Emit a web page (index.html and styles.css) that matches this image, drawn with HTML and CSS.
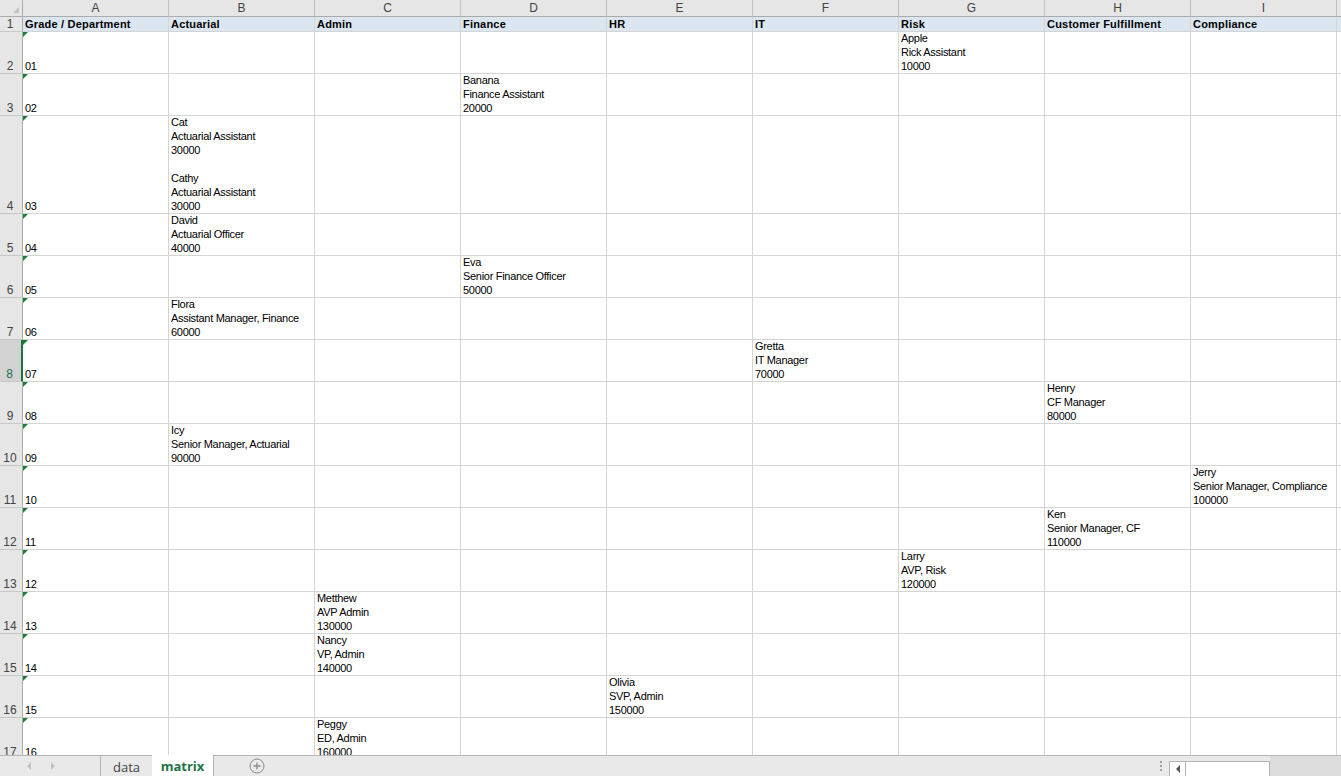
FILE: index.html
```html
<!DOCTYPE html>
<html>
<head>
<meta charset="utf-8">
<link rel="stylesheet" href="styles.css">
</head>
<body>
<div class="app">
  <div class="sheet">
    <div class="grid">
      <!-- column headers -->
      <div class="corner"></div>
      <div class="ch">A</div><div class="ch">B</div><div class="ch">C</div><div class="ch">D</div><div class="ch">E</div><div class="ch">F</div><div class="ch">G</div><div class="ch">H</div><div class="ch">I</div><div class="ch last"></div>
      <!-- row 1 -->
      <div class="rh r1">1</div>
      <div class="c h">Grade / Department</div><div class="c h">Actuarial</div><div class="c h">Admin</div><div class="c h">Finance</div><div class="c h">HR</div><div class="c h">IT</div><div class="c h">Risk</div><div class="c h">Customer Fulfillment</div><div class="c h">Compliance</div><div class="c h j"></div>
      <!-- row 2 -->
      <div class="rh">2</div>
      <div class="c a">01</div><div class="c"></div><div class="c"></div><div class="c"></div><div class="c"></div><div class="c"></div>
      <div class="c"><span>Apple<br>Rick Assistant<br>10000</span></div>
      <div class="c"></div><div class="c"></div><div class="c j"></div>
      <!-- row 3 -->
      <div class="rh">3</div>
      <div class="c a">02</div><div class="c"></div><div class="c"></div>
      <div class="c"><span>Banana<br>Finance Assistant<br>20000</span></div>
      <div class="c"></div><div class="c"></div><div class="c"></div><div class="c"></div><div class="c"></div><div class="c j"></div>
      <!-- row 4 -->
      <div class="rh">4</div>
      <div class="c a">03</div>
      <div class="c"><span>Cat<br>Actuarial Assistant<br>30000<br><br>Cathy<br>Actuarial Assistant<br>30000</span></div>
      <div class="c"></div><div class="c"></div><div class="c"></div><div class="c"></div><div class="c"></div><div class="c"></div><div class="c"></div><div class="c j"></div>
      <!-- row 5 -->
      <div class="rh">5</div>
      <div class="c a">04</div>
      <div class="c"><span>David<br>Actuarial Officer<br>40000</span></div>
      <div class="c"></div><div class="c"></div><div class="c"></div><div class="c"></div><div class="c"></div><div class="c"></div><div class="c"></div><div class="c j"></div>
      <!-- row 6 -->
      <div class="rh">6</div>
      <div class="c a">05</div><div class="c"></div><div class="c"></div>
      <div class="c"><span>Eva<br>Senior Finance Officer<br>50000</span></div>
      <div class="c"></div><div class="c"></div><div class="c"></div><div class="c"></div><div class="c"></div><div class="c j"></div>
      <!-- row 7 -->
      <div class="rh">7</div>
      <div class="c a">06</div>
      <div class="c"><span>Flora<br>Assistant Manager, Finance<br>60000</span></div>
      <div class="c"></div><div class="c"></div><div class="c"></div><div class="c"></div><div class="c"></div><div class="c"></div><div class="c"></div><div class="c j"></div>
      <!-- row 8 -->
      <div class="rh sel">8</div>
      <div class="c a">07</div><div class="c"></div><div class="c"></div><div class="c"></div><div class="c"></div>
      <div class="c"><span>Gretta<br>IT Manager<br>70000</span></div>
      <div class="c"></div><div class="c"></div><div class="c"></div><div class="c j"></div>
      <!-- row 9 -->
      <div class="rh">9</div>
      <div class="c a">08</div><div class="c"></div><div class="c"></div><div class="c"></div><div class="c"></div><div class="c"></div><div class="c"></div>
      <div class="c"><span>Henry<br>CF Manager<br>80000</span></div>
      <div class="c"></div><div class="c j"></div>
      <!-- row 10 -->
      <div class="rh">10</div>
      <div class="c a">09</div>
      <div class="c"><span>Icy<br>Senior Manager, Actuarial<br>90000</span></div>
      <div class="c"></div><div class="c"></div><div class="c"></div><div class="c"></div><div class="c"></div><div class="c"></div><div class="c"></div><div class="c j"></div>
      <!-- row 11 -->
      <div class="rh">11</div>
      <div class="c a">10</div><div class="c"></div><div class="c"></div><div class="c"></div><div class="c"></div><div class="c"></div><div class="c"></div><div class="c"></div>
      <div class="c"><span>Jerry<br>Senior Manager, Compliance<br>100000</span></div>
      <div class="c j"></div>
      <!-- row 12 -->
      <div class="rh">12</div>
      <div class="c a">11</div><div class="c"></div><div class="c"></div><div class="c"></div><div class="c"></div><div class="c"></div><div class="c"></div>
      <div class="c"><span>Ken<br>Senior Manager, CF<br>110000</span></div>
      <div class="c"></div><div class="c j"></div>
      <!-- row 13 -->
      <div class="rh">13</div>
      <div class="c a">12</div><div class="c"></div><div class="c"></div><div class="c"></div><div class="c"></div><div class="c"></div>
      <div class="c"><span>Larry<br>AVP, Risk<br>120000</span></div>
      <div class="c"></div><div class="c"></div><div class="c j"></div>
      <!-- row 14 -->
      <div class="rh">14</div>
      <div class="c a">13</div><div class="c"></div>
      <div class="c"><span>Metthew<br>AVP Admin<br>130000</span></div>
      <div class="c"></div><div class="c"></div><div class="c"></div><div class="c"></div><div class="c"></div><div class="c"></div><div class="c j"></div>
      <!-- row 15 -->
      <div class="rh">15</div>
      <div class="c a">14</div><div class="c"></div>
      <div class="c"><span>Nancy<br>VP, Admin<br>140000</span></div>
      <div class="c"></div><div class="c"></div><div class="c"></div><div class="c"></div><div class="c"></div><div class="c"></div><div class="c j"></div>
      <!-- row 16 -->
      <div class="rh">16</div>
      <div class="c a">15</div><div class="c"></div><div class="c"></div><div class="c"></div>
      <div class="c"><span>Olivia<br>SVP, Admin<br>150000</span></div>
      <div class="c"></div><div class="c"></div><div class="c"></div><div class="c"></div><div class="c j"></div>
      <!-- row 17 -->
      <div class="rh">17</div>
      <div class="c a">16</div><div class="c"></div>
      <div class="c"><span>Peggy<br>ED, Admin<br>160000</span></div>
      <div class="c"></div><div class="c"></div><div class="c"></div><div class="c"></div><div class="c"></div><div class="c"></div><div class="c j"></div>
    </div>
  </div>
  <div class="tabbar">
    <div class="nav">
      <span class="arrow left"></span>
      <span class="arrow right"></span>
    </div>
    <div class="tab">data</div>
    <div class="tab active">matrix</div>
    <div class="add">
      <svg width="16" height="16" viewBox="0 0 16 16"><circle cx="8" cy="8" r="7" fill="none" stroke="#8a8a8a" stroke-width="1"/><path d="M8 4.5v7M4.5 8h7" stroke="#8a8a8a" stroke-width="1.3"/></svg>
    </div>
    <div class="spacer"></div>
    <div class="dots"><i></i><i></i><i></i></div>
    <div class="hscroll">
      <div class="sbtn"><span class="sarrow"></span></div>
      <div class="strack"></div>
    </div>
    <div class="tail"></div>
  </div>
</div>
</body>
</html>
```
FILE: styles.css
```css
html, body {
  margin: 0;
  padding: 0;
  background: #ffffff;
  overflow: hidden;
}
.app {
  width: 1341px;
  height: 776px;
  display: flex;
  flex-direction: column;
  font-family: "Liberation Sans", Arial, sans-serif;
}
.sheet {
  flex: 1;
  overflow: hidden;
  min-height: 0;
}
.grid {
  display: grid;
  grid-template-columns: 23px repeat(9, 146px) 1fr;
  grid-template-rows: 17px 15px 42px 42px 98px repeat(13, 42px);
}
.grid > div {
  box-sizing: border-box;
}
.corner {
  position: relative;
  background: #e6e6e6;
  border-right: 1px solid #ababab;
  border-bottom: 1px solid #ababab;
}
.corner::after {
  content: "";
  position: absolute;
  right: 3px;
  bottom: 3px;
  width: 0;
  height: 0;
  border-left: 6px solid transparent;
  border-bottom: 6px solid #c4c4c4;
}
.ch {
  background: #e6e6e6;
  border-right: 1px solid #c0c0c0;
  border-bottom: 1px solid #ababab;
  font-size: 12px;
  line-height: 16px;
  color: #444444;
  text-align: center;
}
.ch.last {
  border-right: none;
}
.rh {
  background: #e6e6e6;
  border-right: 1px solid #ababab;
  border-bottom: 1px solid #c8c8c8;
  font-size: 12px;
  line-height: 14px;
  color: #444444;
  display: flex;
  align-items: flex-end;
  justify-content: center;
  padding-right: 2px;
  overflow: hidden;
}
.rh.r1 {
  align-items: center;
}
.rh.sel {
  background: #d2d2d2;
  color: #217346;
  border-right: 2px solid #217346;
}
.c {
  position: relative;
  border-right: 1px solid #d4d4d4;
  border-bottom: 1px solid #d4d4d4;
  padding-left: 2px;
  font-size: 11px;
  line-height: 14px;
  letter-spacing: -0.3px;
  color: #000000;
  display: flex;
  align-items: flex-end;
  overflow: hidden;
  white-space: nowrap;
}
.c.h {
  background: #dce6f1;
  font-weight: bold;
  letter-spacing: 0.2px;
  align-items: center;
  line-height: 14px;
}
.c.j {
  border-right: none;
}
.c.a::before {
  content: "";
  position: absolute;
  left: 0;
  top: 0;
  width: 0;
  height: 0;
  border-top: 5px solid #1f7a35;
  border-right: 5px solid transparent;
}
.tabbar {
  height: 21px;
  flex: 0 0 21px;
  box-sizing: border-box;
  border-top: 1px solid #b6b6b6;
  background: #e9e9e9;
  display: flex;
  align-items: stretch;
  font-family: "Open Sans", "Liberation Sans", sans-serif;
}
.nav {
  width: 100px;
  display: flex;
  align-items: center;
  gap: 20px;
  padding-left: 27px;
  box-sizing: border-box;
}
.arrow {
  width: 0;
  height: 0;
  border-top: 4px solid transparent;
  border-bottom: 4px solid transparent;
}
.arrow.left {
  border-right: 4px solid #c2c2c2;
}
.arrow.right {
  border-left: 4px solid #c2c2c2;
}
.tab {
  box-sizing: border-box;
  border-left: 1px solid #b6b6b6;
  font-size: 13px;
  color: #444444;
  display: flex;
  align-items: center;
  justify-content: center;
  width: 52px;
  padding-top: 1px;
}
.tab.active {
  width: 62px;
  background: #ffffff;
  margin-top: -1px;
  border-left: none;
  border-right: 1px solid #b6b6b6;
  color: #217346;
  font-weight: bold;
}
.add {
  width: 60px;
  display: flex;
  align-items: center;
  justify-content: center;
  padding-left: 25px;
  box-sizing: border-box;
}
.spacer {
  flex: 1;
}
.dots {
  width: 16px;
  display: flex;
  flex-direction: column;
  align-items: center;
  justify-content: center;
  gap: 2px;
}
.dots i {
  display: block;
  width: 2px;
  height: 2px;
  background: #a0a0a0;
}
.hscroll {
  width: 101px;
  margin-top: 5px;
  box-sizing: border-box;
  border: 1px solid #b4b4b4;
  border-bottom: none;
  background: #ffffff;
  display: flex;
}
.sbtn {
  width: 15px;
  border-right: 1px solid #b4b4b4;
  display: flex;
  align-items: center;
  justify-content: center;
}
.sarrow {
  width: 0;
  height: 0;
  border-top: 4px solid transparent;
  border-bottom: 4px solid transparent;
  border-right: 4px solid #555555;
}
.strack {
  flex: 1;
}
.tail {
  width: 71px;
  background: #dcdcdc;
}
```
